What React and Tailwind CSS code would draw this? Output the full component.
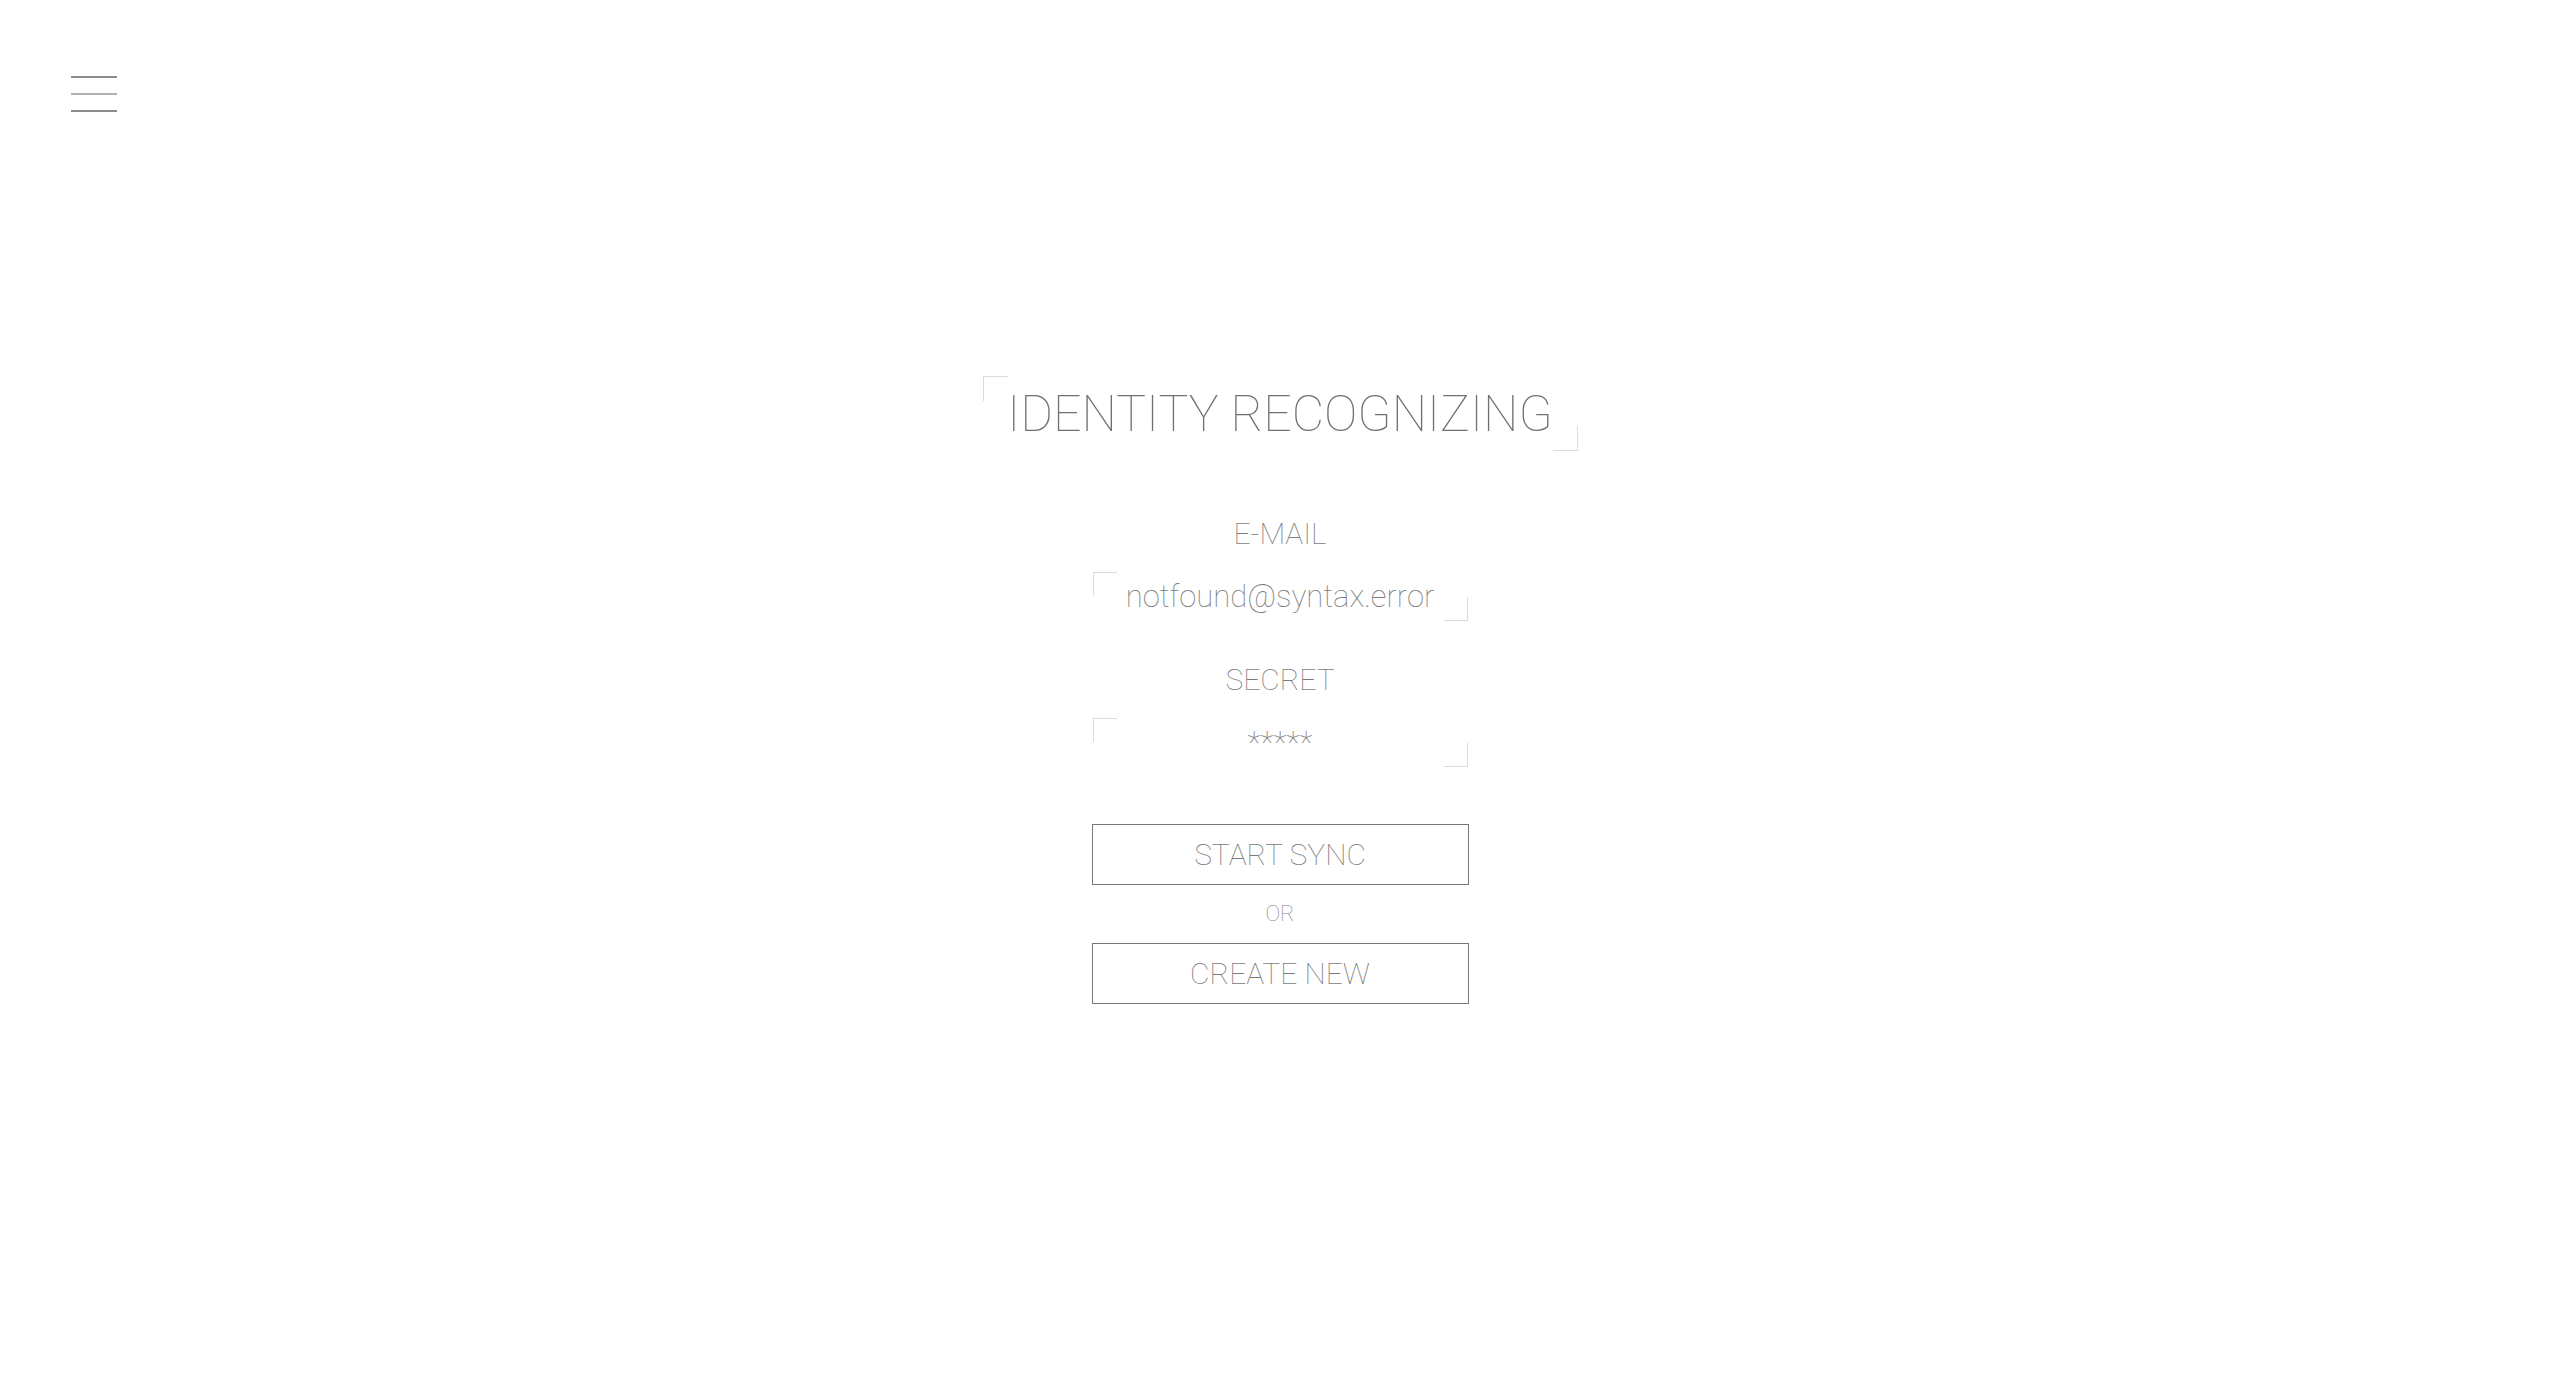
import React from "react";

function Corners({ size = "w-[24px] h-[24px]" }) {
  return (
    <>
      <span className={`absolute left-0 top-0 ${size} border-l border-t border-[#dcdcdc] pointer-events-none`} />
      <span className={`absolute right-0 bottom-0 ${size} border-r border-b border-[#dcdcdc] pointer-events-none`} />
    </>
  );
}

export default function App() {
  return (
    <div className="min-h-screen w-full bg-white font-['Roboto','Liberation_Sans',sans-serif] font-thin text-[#7a7a7a]">
      <header className="pt-[76px] pl-[71px]">
        <button className="flex w-[46px] flex-col gap-[15px]" aria-label="menu">
          <span className="block h-[2px] w-full bg-[#8c8c8c]" />
          <span className="block h-[2px] w-full bg-[#b2b2b2]" />
          <span className="block h-[2px] w-full bg-[#8c8c8c]" />
        </button>
      </header>

      <main className="flex flex-col items-center">
        <div className="relative mt-[264px] flex h-[75px] w-[595px] items-center justify-center">
          <Corners size="w-[25px] h-[25px]" />
          <h1 className="text-[50px] leading-none font-thin text-[#707070]">IDENTITY RECOGNIZING</h1>
        </div>

        <label className="mt-[63px] flex h-[40px] items-center justify-center text-[30px] leading-none text-[#7c7c7c]">
          E-MAIL
        </label>
        <div className="relative mt-[18px] flex h-[49px] w-[375px] items-center justify-center">
          <Corners />
          <input
            type="text"
            readOnly
            defaultValue="notfound@syntax.error"
            className="w-full bg-transparent text-center text-[31px] leading-none font-thin text-[#7a7a7a] outline-none"
          />
        </div>

        <label className="mt-[39px] flex h-[40px] items-center justify-center text-[30px] leading-none text-[#7c7c7c]">
          SECRET
        </label>
        <div className="relative mt-[18px] flex h-[49px] w-[375px] items-center justify-center">
          <Corners />
          <input
            type="text"
            readOnly
            defaultValue="*****"
            className="w-full bg-transparent text-center text-[31px] leading-none font-thin text-[#808080] outline-none"
          />
        </div>

        <button className="mt-[57px] flex h-[61px] w-[377px] items-center justify-center border border-[#777] text-[30px] leading-none font-thin text-[#7a7a7a]">
          START SYNC
        </button>
        <div className="mt-[19px] flex h-[20px] items-center justify-center text-[22px] leading-none text-[#808080]">
          OR
        </div>
        <button className="mt-[19px] flex h-[61px] w-[377px] items-center justify-center border border-[#777] text-[30px] leading-none font-thin text-[#7a7a7a]">
          CREATE NEW
        </button>
      </main>
    </div>
  );
}
